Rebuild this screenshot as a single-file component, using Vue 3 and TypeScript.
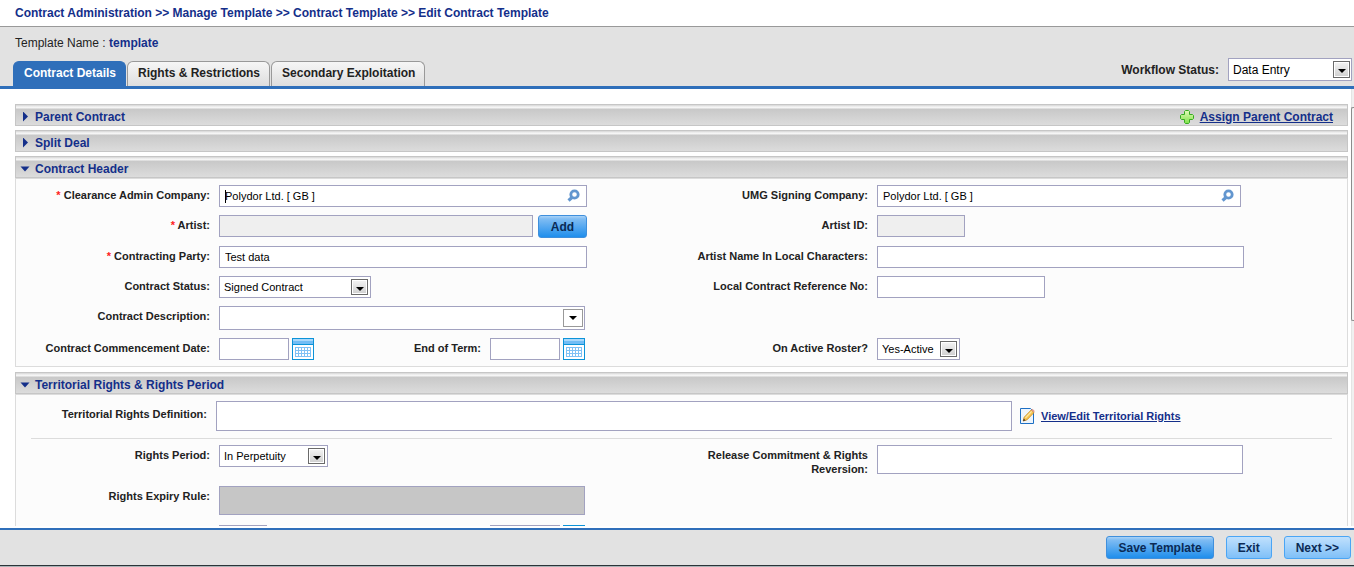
<script setup lang="ts">
import { ref } from 'vue'

const crumbs: string[] = ['Contract Administration', 'Manage Template', 'Contract Template', 'Edit Contract Template']
const tabs: string[] = ['Contract Details', 'Rights & Restrictions', 'Secondary Exploitation']
const activeTab = ref(0)

const workflow = ref('Data Entry')
const adminCompany = ref('Polydor Ltd. [ GB ]')
const signingCompany = ref('Polydor Ltd. [ GB ]')
const party = ref('Test data')
</script>

<template>
  <div class="page">
    <nav class="crumbs">
      <template v-for="(c, i) in crumbs" :key="c">
        <span v-if="i"> &gt;&gt; </span><a href="#">{{ c }}</a>
      </template>
    </nav>

    <header class="head">
      <div class="head-left">
        <p class="name">Template Name : <b>template</b></p>
        <div class="tabs">
          <button
            v-for="(t, i) in tabs"
            :key="t"
            type="button"
            class="tab"
            :class="{ active: i === activeTab }"
            @click="activeTab = i"
          >{{ t }}</button>
        </div>
      </div>
      <div class="workflow">
        <label for="workflow">Workflow Status:</label>
        <div class="select w-flow">
          <select id="workflow" v-model="workflow"><option>Data Entry</option></select>
          <span class="arrow"></span>
        </div>
      </div>
    </header>

    <div class="body">
      <main class="content">
        <section>
          <div class="bar">
            <button type="button" class="toggle"><i class="tri"></i>Parent Contract</button>
            <a href="#" class="assign">
              <svg width="14" height="14" viewBox="0 0 14 14">
                <defs>
                  <linearGradient id="plus" x1="0" y1="0" x2="0" y2="1">
                    <stop offset="0" stop-color="#e2fbb8" />
                    <stop offset="1" stop-color="#7fe04a" />
                  </linearGradient>
                </defs>
                <path d="M5.500 .5h3l1 1v3h3l1 1v3l-1 1h-3v3l-1 1h-3l-1-1v-3h-3l-1-1v-3l1-1h3v-3z" fill="url(#plus)" stroke="#35ab20" />
              </svg>
              <span>Assign Parent Contract</span>
            </a>
          </div>
        </section>

        <section>
          <div class="bar">
            <button type="button" class="toggle"><i class="tri"></i>Split Deal</button>
          </div>
        </section>

        <section>
          <div class="bar">
            <button type="button" class="toggle"><i class="tri down"></i>Contract Header</button>
          </div>
          <div class="panel">
            <div class="form">
              <label class="lbl" for="admin"><em>*</em> Clearance Admin Company:</label>
              <div class="field">
                <div class="lookup w-368">
                  <input id="admin" v-model="adminCompany" type="text" />
                  <i class="caret"></i>
                  <button type="button" aria-label="Search company">
                    <svg width="13" height="13" viewBox="0 0 13 13"><circle cx="7.500" cy="5.500" r="3.700" fill="none" stroke="#6296cf" stroke-width="2.800" /><path d="M5 8.500L1.500 11.500" stroke="#6296cf" stroke-width="3.200" /></svg>
                  </button>
                </div>
              </div>
              <label class="lbl" for="signing">UMG Signing Company:</label>
              <div class="field">
                <div class="lookup w-364">
                  <input id="signing" v-model="signingCompany" type="text" />
                  <button type="button" aria-label="Search company">
                    <svg width="13" height="13" viewBox="0 0 13 13"><circle cx="7.500" cy="5.500" r="3.700" fill="none" stroke="#6296cf" stroke-width="2.800" /><path d="M5 8.500L1.500 11.500" stroke="#6296cf" stroke-width="3.200" /></svg>
                  </button>
                </div>
              </div>

              <label class="lbl" for="artist"><em>*</em> Artist:</label>
              <div class="field">
                <div class="artist w-368">
                  <input id="artist" type="text" disabled />
                  <button type="button" class="btn primary">Add</button>
                </div>
              </div>
              <label class="lbl" for="artist-id">Artist ID:</label>
              <div class="field"><input id="artist-id" class="w-88" type="text" disabled /></div>

              <label class="lbl" for="party"><em>*</em> Contracting Party:</label>
              <div class="field"><input id="party" v-model="party" class="w-368" type="text" /></div>
              <label class="lbl" for="local-name">Artist Name In Local Characters:</label>
              <div class="field"><input id="local-name" class="w-367" type="text" /></div>

              <label class="lbl" for="status">Contract Status:</label>
              <div class="field">
                <div class="select w-152">
                  <select id="status"><option>Signed Contract</option></select>
                  <span class="arrow"></span>
                </div>
              </div>
              <label class="lbl" for="ref-no">Local Contract Reference No:</label>
              <div class="field"><input id="ref-no" class="w-168" type="text" /></div>

              <label class="lbl" for="desc">Contract Description:</label>
              <div class="field wide">
                <div class="select combo w-366">
                  <select id="desc"><option></option></select>
                  <span class="arrow"></span>
                </div>
              </div>

              <label class="lbl" for="start">Contract Commencement Date:</label>
              <div class="field dates w-366">
                <input id="start" class="w-70" type="text" />
                <button type="button" class="cal" aria-label="Pick start date">
                  <svg width="22" height="22" viewBox="0 0 22 22"><rect x=".5" y=".5" width="21" height="21" fill="#fff" stroke="#0c93d8" /><path d="M1 1h20v2H1z" fill="#a9d8fb" /><path d="M1 3h20v3H1z" fill="#72bdf5" /><path d="M1 6.5h20" stroke="#0c93d8" /><path d="M3 9.5h16M3 12.5h16M3 15.5h16M3 18.5h16M3.5 9v10M6.5 9v10M9.5 9v10M12.5 9v10M15.5 9v10M18.5 9v10" stroke="#7fc1f5" fill="none" /></svg>
                </button>
                <label class="lbl end" for="end">End of Term:</label>
                <input id="end" class="w-70" type="text" />
                <button type="button" class="cal" aria-label="Pick end date">
                  <svg width="22" height="22" viewBox="0 0 22 22"><rect x=".5" y=".5" width="21" height="21" fill="#fff" stroke="#0c93d8" /><path d="M1 1h20v2H1z" fill="#a9d8fb" /><path d="M1 3h20v3H1z" fill="#72bdf5" /><path d="M1 6.5h20" stroke="#0c93d8" /><path d="M3 9.5h16M3 12.5h16M3 15.5h16M3 18.5h16M3.5 9v10M6.5 9v10M9.5 9v10M12.5 9v10M15.5 9v10M18.5 9v10" stroke="#7fc1f5" fill="none" /></svg>
                </button>
              </div>
              <label class="lbl" for="roster">On Active Roster?</label>
              <div class="field">
                <div class="select w-83">
                  <select id="roster"><option>Yes-Active</option></select>
                  <span class="arrow"></span>
                </div>
              </div>
            </div>
          </div>
        </section>

        <section class="last">
          <div class="bar">
            <button type="button" class="toggle"><i class="tri down"></i>Territorial Rights &amp; Rights Period</button>
          </div>
          <div class="panel">
            <div class="territory">
              <label class="lbl" for="territory">Territorial Rights Definition:</label>
              <textarea id="territory" rows="1"></textarea>
              <a href="#" class="edit">
                <svg width="15" height="16" viewBox="0 0 15 16"><path d="M.5.5h10l3 3v12H.5z" fill="#eef5fc" stroke="#1d6fc4" /><path d="M3.200 13l1-3.800 7-7.200 2.800 2.600-7.100 7.300z" fill="#f7c651" stroke="#c98a1e" stroke-width=".8" /><path d="M5.500 9.800l6.200-6.400" stroke="#fdeaa8" stroke-width="1.200" /><path d="M3 13.200l.8-2.600 1.800 1.800z" fill="#4a3a2a" /><path d="M11.200 2l1.200-1.200 2.300 2.300L13.900 4.600z" fill="#e39a8a" /></svg>
                <span>View/Edit Territorial Rights</span>
              </a>
            </div>
            <hr />
            <div class="form period">
              <label class="lbl" for="period">Rights Period:</label>
              <div class="field">
                <div class="select w-109">
                  <select id="period"><option>In Perpetuity</option></select>
                  <span class="arrow"></span>
                </div>
              </div>
              <label class="lbl" for="reversion">Release Commitment &amp; Rights Reversion:</label>
              <div class="field"><textarea id="reversion" class="w-366" rows="1"></textarea></div>

              <label class="lbl" for="expiry">Rights Expiry Rule:</label>
              <div class="field wide"><textarea id="expiry" class="w-366" rows="1" disabled></textarea></div>

              <div class="field dates w-366 third">
                <input class="w-48" type="text" aria-label="Rights term" />
                <input class="w-70 push" type="text" aria-label="Rights expiry date" />
                <button type="button" class="cal" aria-label="Pick expiry date">
                  <svg width="22" height="22" viewBox="0 0 22 22"><rect x=".5" y=".5" width="21" height="21" fill="#fff" stroke="#0c93d8" /></svg>
                </button>
              </div>
            </div>
          </div>
        </section>
      </main>
      <div class="rail"><div class="thumb"></div></div>
    </div>

    <footer class="foot">
      <button type="button" class="btn primary">Save Template</button>
      <button type="button" class="btn">Exit</button>
      <button type="button" class="btn">Next &gt;&gt;</button>
    </footer>
    <div class="edge"></div>
  </div>
</template>

<style>
body {
  margin: 0;
  background: #fff;
}
</style>

<style scoped>
.page {
  display: flex;
  flex-direction: column;
  height: 100vh;
  overflow: hidden;
  font: 12px/14px "Liberation Sans", Arial, sans-serif;
  color: #222;
}
.page * {
  box-sizing: border-box;
}
button,
input,
select,
textarea {
  font: inherit;
  margin: 0;
}
button {
  cursor: pointer;
}
svg {
  display: block;
  flex: none;
}

.crumbs {
  flex: none;
  padding: 6px 15px;
  border-bottom: 1px solid #999;
  font-weight: bold;
  color: #142f8a;
}
.crumbs a {
  color: inherit;
  text-decoration: none;
}

.head {
  flex: none;
  display: flex;
  justify-content: space-between;
  align-items: flex-end;
  background: #e2e2e2;
  border-bottom: 3px solid #2f6fba;
}
.name {
  margin: 0;
  padding: 9px 15px 11px;
}
.name b {
  color: #142f8a;
}
.tabs {
  display: flex;
  gap: 1px;
  padding-left: 13px;
}
.tab {
  height: 25px;
  padding: 0 9px 2px 10px;
  border: 1px solid #999;
  border-bottom: 0;
  border-radius: 6px 6px 0 0;
  background: linear-gradient(#f6f6f6, #dedede);
  font-weight: bold;
  color: #222;
}
.tab.active {
  background: #2f6fba;
  border-color: #2f6fba;
  color: #fff;
}
.workflow {
  display: flex;
  align-items: center;
  gap: 9px;
  padding: 0 2px 5px 0;
  font-weight: bold;
}

.body {
  flex: 1;
  min-height: 0;
  display: flex;
  padding-bottom: 2px;
  overflow: hidden;
}
.content {
  flex: 1;
  min-width: 0;
  display: flex;
  flex-direction: column;
  gap: 4px;
  padding: 15px 3px 0 15px;
  overflow: hidden;
}
.content section {
  flex: none;
}
.content .last {
  margin-top: 1px;
}
.rail {
  flex: none;
  width: 3px;
  padding-top: 18px;
  border-left: 1px solid #e4e4e4;
  background: #f0f0f0;
}
.thumb {
  height: 54%;
  min-height: 20px;
  max-height: 214px;
  margin-left: -1px;
  border: 1px solid #8c8c8c;
  border-right: 0;
  border-radius: 2px 0 0 2px;
  background: #f4f4f4;
}

.bar {
  display: flex;
  justify-content: space-between;
  align-items: center;
  height: 22px;
  padding: 3px 14px 0 4px;
  border: 1px solid #c6c6c6;
  background: linear-gradient(#d6d6d6 0, #e4e4e4 1px, #f5f5f5 2px, #f5f5f5 3px, #c8c8c8 4px, #dcdcdc 100%);
  font-weight: bold;
  color: #142f8a;
}
.toggle {
  display: flex;
  align-items: center;
  gap: 5px;
  padding: 0;
  border: 0;
  background: none;
  font-weight: bold;
  color: inherit;
}
.tri {
  width: 10px;
  height: 10px;
  background: #142f8a;
  clip-path: polygon(30% 0, 80% 50%, 30% 100%);
}
.tri.down {
  clip-path: polygon(5% 30%, 95% 30%, 50% 80%);
}
.assign,
.edit {
  display: flex;
  align-items: center;
  gap: 6px;
  font-weight: bold;
  color: #142f8a;
}

.panel {
  border: 1px solid #dcdcdc;
  background: #fcfcfc;
}
.form {
  display: grid;
  grid-template-columns: 194px minmax(0, 1fr) 194px minmax(0, 1fr);
  gap: 8px 9px;
  align-items: start;
  padding: 6px 24px 6px 0;
}
.lbl {
  padding-top: 3px;
  font-size: 11px;
  font-weight: bold;
  text-align: right;
}
.lbl em {
  font-style: normal;
  color: #f22;
}
.field.wide {
  grid-column: 2 / -1;
}

input,
textarea {
  display: block;
  max-width: 100%;
  height: 22px;
  padding: 0 5px;
  border: 1px solid #a2a2c0;
  border-radius: 0;
  background: #fff;
  font-size: 11px;
  color: #000;
  outline: 0;
}
textarea {
  height: 29px;
  padding: 4px 5px;
  resize: none;
}
input:disabled {
  background: #efefef;
}
textarea:disabled {
  background: #c6c6c6;
}
.lookup,
.select {
  position: relative;
  max-width: 100%;
}
.lookup input {
  width: 100%;
  padding-right: 24px;
}
.lookup button {
  position: absolute;
  top: 4px;
  right: 7px;
  padding: 0;
  border: 0;
  background: none;
}
.caret {
  position: absolute;
  top: 5px;
  left: 6px;
  width: 1px;
  height: 13px;
  background: #000;
}
.select select {
  display: block;
  width: 100%;
  height: 22px;
  padding: 0 20px 0 4px;
  border: 1px solid #a2a2c0;
  border-radius: 0;
  background: #fff;
  font-size: 11px;
  color: #000;
  appearance: none;
}
.select .arrow {
  position: absolute;
  top: 3px;
  right: 3px;
  display: flex;
  align-items: center;
  justify-content: center;
  width: 17px;
  height: 16px;
  padding-top: 3px;
  border: 1px solid #6a6a6a;
  box-shadow: inset 0 0 0 1px #fff;
  background: linear-gradient(#f4f4f4, #cfcfcf);
  pointer-events: none;
}
.arrow::before {
  content: "";
  border: 4px solid transparent;
  border-top-color: #000;
  border-bottom: 0;
}
.select.combo select {
  height: 24px;
}
.select.combo .arrow {
  right: 2px;
  width: 20px;
  height: 18px;
  padding-top: 0;
  border-color: #999;
  background: #fff;
}
.select.w-flow select {
  height: 23px;
  font-size: 12px;
}
.select.w-flow .arrow {
  right: 2px;
  height: 17px;
}
.artist {
  display: flex;
  gap: 5px;
}
.artist input {
  flex: 1;
  min-width: 0;
}
.artist .btn {
  width: 49px;
}
.dates {
  display: flex;
  gap: 3px;
}
.cal {
  padding: 0;
  border: 0;
  background: none;
}
.end {
  margin: 0 6px 0 auto;
}
.push {
  margin-left: auto;
}

.territory {
  display: flex;
  align-items: center;
  gap: 8px;
  padding: 6px 15px 7px 0;
}
.territory .lbl {
  width: 191px;
  padding: 0 0 4px;
}
.territory textarea {
  flex: 0 1 796px;
  min-width: 0;
  height: 30px;
  margin-left: 1px;
}
.edit {
  font-size: 11px;
}
hr {
  margin: 0 15px;
  border: 0;
  border-top: 1px solid #dcdcdc;
}
.period {
  row-gap: 10px;
}
.third {
  grid-column: 2;
}

.w-flow { width: 124px; font-weight: normal; }
.w-48 { width: 48px; }
.w-70 { width: 70px; }
.w-83 { width: 83px; }
.w-88 { width: 88px; }
.w-109 { width: 109px; }
.w-152 { width: 152px; }
.w-168 { width: 168px; }
.w-364 { width: 364px; }
.w-366 { width: 366px; }
.w-367 { width: 367px; }
.w-368 { width: 368px; }

.foot {
  flex: none;
  display: flex;
  justify-content: flex-end;
  gap: 12px;
  padding: 6px 3px;
  border-top: 2px solid #2f6fba;
  background: #e2e2e2;
}
.btn {
  height: 23px;
  padding: 0 11px;
  border: 1px solid #4aa5f5;
  border-radius: 3px;
  background: linear-gradient(#c0e0fd, #7fc0f8);
  font-weight: bold;
  color: #0b2a55;
  white-space: nowrap;
}
.btn.primary {
  border-color: #3f8fdc;
  background: linear-gradient(#a8d2f7 0, #7fbcf3 3px, #1f8eec 100%);
}
.edge {
  flex: none;
  height: 2px;
  border-top: 1px solid #2b3338;
  background: #a9b3b6;
}
</style>
